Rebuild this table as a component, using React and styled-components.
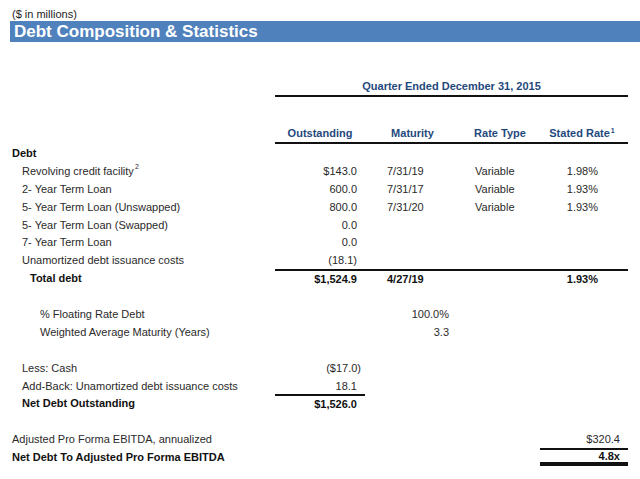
import React from 'react';
import styled, { createGlobalStyle } from 'styled-components';

const GlobalStyle = createGlobalStyle`
  html, body {
    margin: 0;
    padding: 0;
    background: #fff;
  }
  body {
    font-family: Arial, "Liberation Sans", Helvetica, sans-serif;
    color: #222;
  }
`;

const Page = styled.div`
  width: 640px;
  height: 479px;
  overflow: hidden;
  padding: 7px 0 0 10px;
  box-sizing: border-box;
`;

const Note = styled.div`
  font-size: 11px;
  line-height: 14px;
  padding-left: 2px;
  color: #222;
`;

const TitleBar = styled.div`
  height: 21px;
  background: #4f81bd;
  color: #fff;
  font-weight: bold;
  font-size: 17px;
  line-height: 21px;
  padding-left: 4px;
  margin-bottom: 35px;
`;

const Table = styled.div`
  padding-left: 2px;
`;

const Row = styled.div`
  display: grid;
  grid-template-columns: 263px 90px 95px 80px 88px;
  height: ${p => p.$h || 17.9}px;
  margin-bottom: ${p => p.$mb || 0}px;
  font-size: 11px;
  font-weight: ${p => (p.$bold ? 'bold' : 'normal')};
  color: ${p => (p.$bold ? '#111' : '#2a2a2a')};
`;

const Label = styled.div`
  display: flex;
  align-items: center;
  padding-left: ${p => p.$indent || 0}px;
  white-space: nowrap;
`;

const Cell = styled.div`
  display: flex;
  align-items: center;
  box-sizing: border-box;
  justify-content: ${p => (p.$left ? 'flex-start' : 'flex-end')};
  padding-left: ${p => p.$pl || 0}px;
  padding-right: ${p => p.$pr || 0}px;
  border-top: ${p => (p.$top ? `${p.$top}px solid #111` : 'none')};
  border-bottom: ${p => (p.$bottom ? `${p.$bottom}px solid #111` : 'none')};
  white-space: nowrap;
`;

const Span = styled.div`
  grid-column: 2 / 6;
  display: flex;
  align-items: center;
  justify-content: ${p => (p.$center ? 'center' : 'space-between')};
  border-bottom: 2px solid #111;
  color: #1f497d;
  font-weight: bold;
`;

const Head = styled.div`
  width: ${p => p.$w}px;
  text-align: center;
  padding-right: ${p => p.$pr || 0}px;
  box-sizing: border-box;
`;

const Sup = styled.span`
  position: relative;
  top: -4px;
  font-size: 7px;
  margin-left: 1px;
`;

const debt = [
  ['Revolving credit facility', '2', '$143.0', '7/31/19', 'Variable', '1.98%'],
  ['2- Year Term Loan', null, '600.0', '7/31/17', 'Variable', '1.93%'],
  ['5- Year Term Loan (Unswapped)', null, '800.0', '7/31/20', 'Variable', '1.93%'],
  ['5- Year Term Loan (Swapped)', null, '0.0', '', '', ''],
  ['7- Year Term Loan', null, '0.0', '', '', ''],
  ['Unamortized debt issuance costs', null, '(18.1)', '', '', ''],
];

const Blank = () => <Row />;

export default function App() {
  return (
    <Page>
      <GlobalStyle />
      <Note>($ in millions)</Note>
      <TitleBar>Debt Composition &amp; Statistics</TitleBar>
      <Table>
        <Row $h={20} $mb={27}>
          <Label />
          <Span $center>Quarter Ended December 31, 2015</Span>
        </Row>
        <Row $h={20}>
          <Label />
          <Span>
            <Head $w={90}>Outstanding</Head>
            <Head $w={95}>Maturity</Head>
            <Head $w={80}>Rate Type</Head>
            <Head $w={88} $pr={4}>Stated Rate<Sup>1</Sup></Head>
          </Span>
        </Row>

        <Row $bold><Label>Debt</Label></Row>
        {debt.map(([label, sup, amt, mat, type, rate]) => (
          <Row key={label}>
            <Label $indent={10}>{label}{sup && <Sup>{sup}</Sup>}</Label>
            <Cell $pr={8}>{amt}</Cell>
            <Cell $left $pl={22}>{mat}</Cell>
            <Cell $left $pl={15}>{type}</Cell>
            <Cell $pr={30}>{rate}</Cell>
          </Row>
        ))}
        <Row $bold>
          <Label $indent={18}>Total debt</Label>
          <Cell $pr={8} $top={2}>$1,524.9</Cell>
          <Cell $left $pl={22} $top={2}>4/27/19</Cell>
          <Cell $top={2} />
          <Cell $pr={30} $top={2}>1.93%</Cell>
        </Row>
        <Blank />

        <Row>
          <Label $indent={28}>% Floating Rate Debt</Label>
          <Cell />
          <Cell $pr={11}>100.0%</Cell>
        </Row>
        <Row>
          <Label $indent={28}>Weighted Average Maturity (Years)</Label>
          <Cell />
          <Cell $pr={11}>3.3</Cell>
        </Row>
        <Blank />

        <Row>
          <Label $indent={10}>Less: Cash</Label>
          <Cell $pr={4}>($17.0)</Cell>
        </Row>
        <Row>
          <Label $indent={10}>Add-Back: Unamortized debt issuance costs</Label>
          <Cell $pr={8}>18.1</Cell>
        </Row>
        <Row $bold>
          <Label $indent={10}>Net Debt Outstanding</Label>
          <Cell $pr={8} $top={2}>$1,526.0</Cell>
        </Row>
        <Blank />

        <Row>
          <Label>Adjusted Pro Forma EBITDA, annualized</Label>
          <Cell /><Cell /><Cell />
          <Cell $pr={8}>$320.4</Cell>
        </Row>
        <Row $bold>
          <Label>Net Debt To Adjusted Pro Forma EBITDA</Label>
          <Cell /><Cell /><Cell />
          <Cell $pr={8} $top={2} $bottom={4}>4.8x</Cell>
        </Row>
      </Table>
    </Page>
  );
}
